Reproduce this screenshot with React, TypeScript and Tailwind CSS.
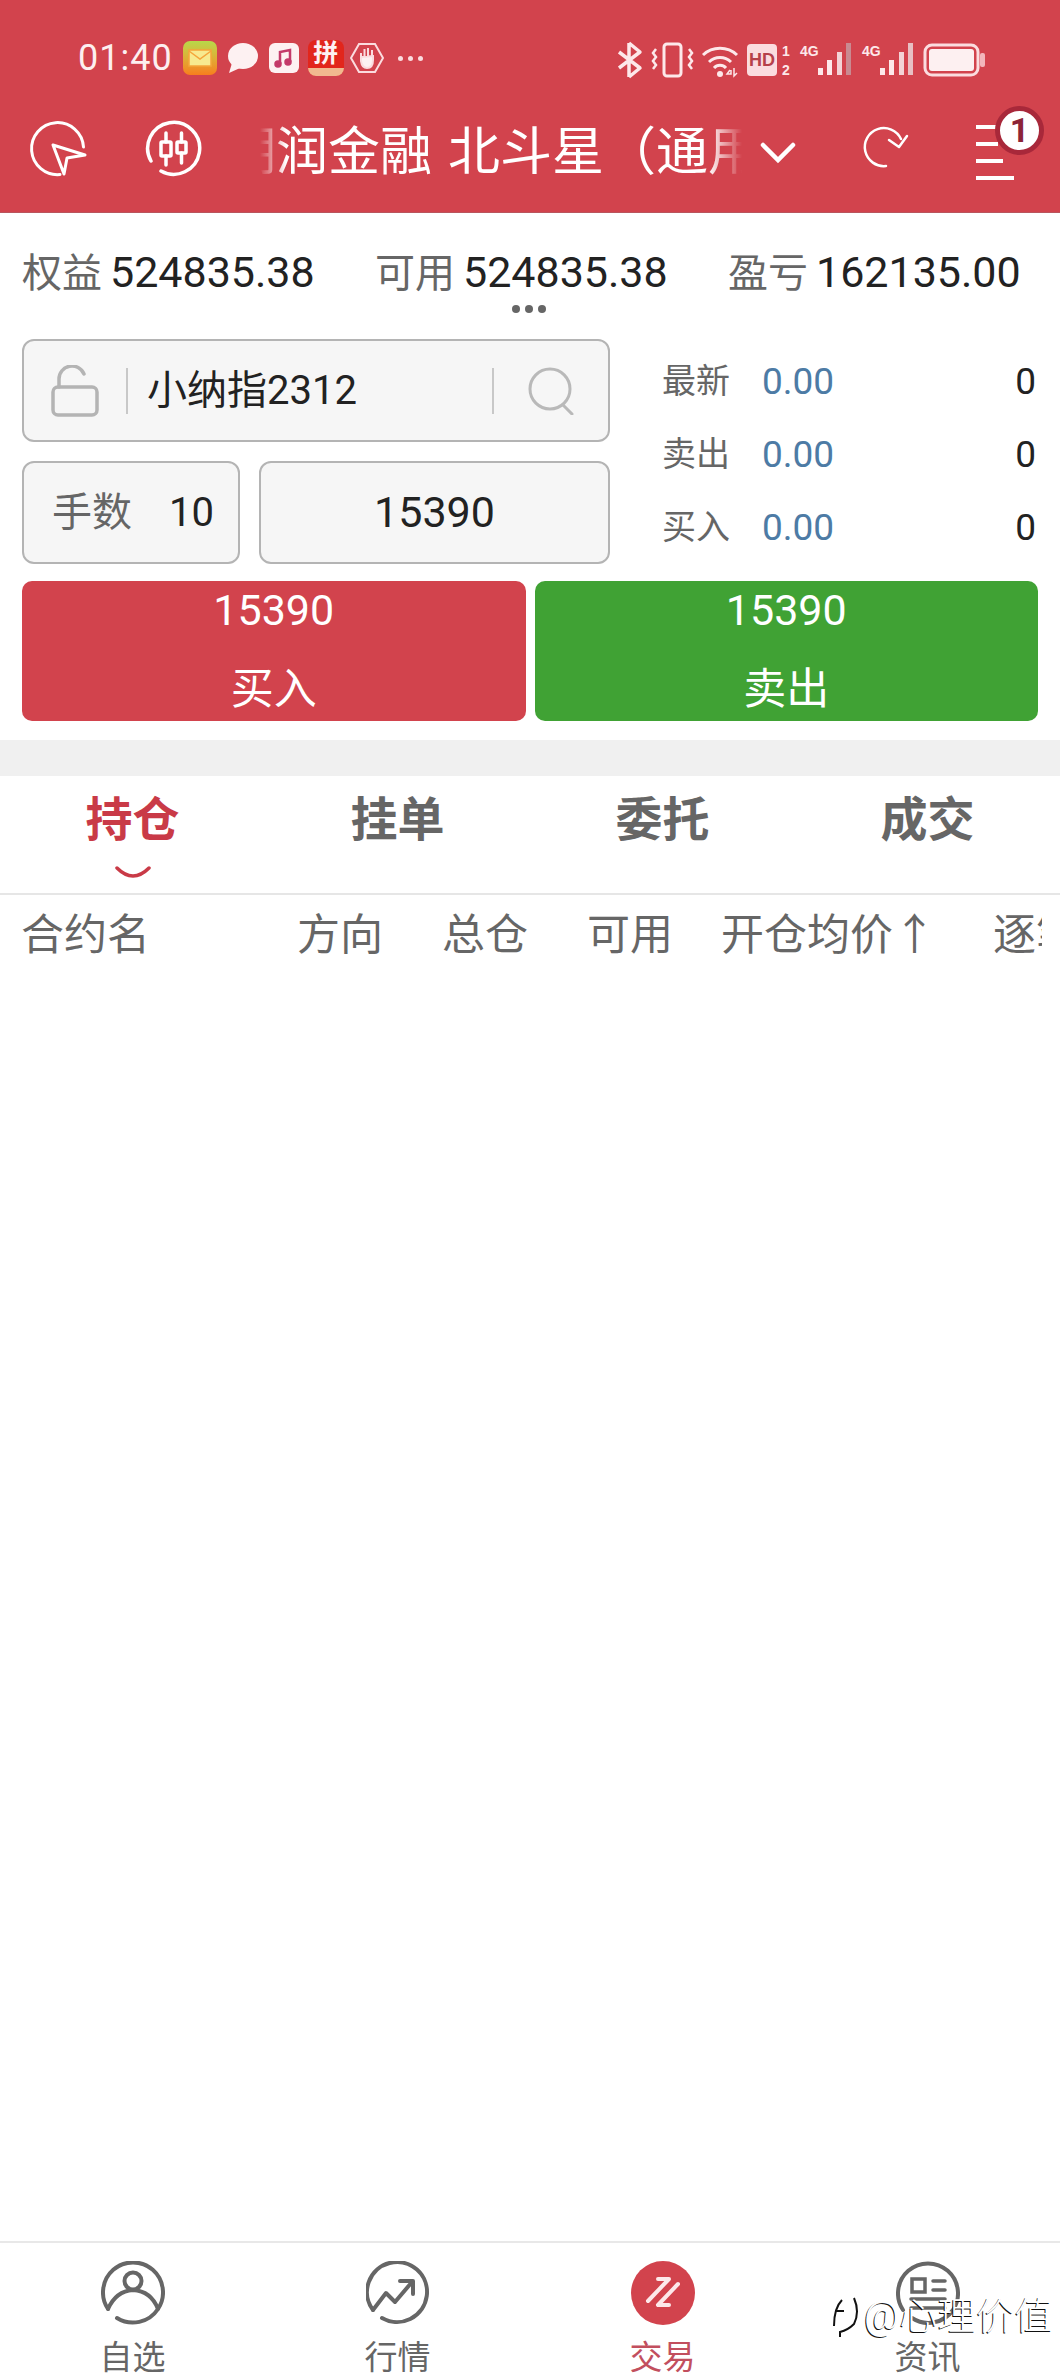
import { ReactNode } from "react";

function LocateIcon() {
  return (
    <svg width="60" height="60" viewBox="0 0 60 60" fill="none" stroke="#fff" strokeWidth="3">
      <path d="M55.5 28 A26 26 0 1 0 32 55.5" strokeLinecap="round" />
      <path d="M25 26 L57 36 L39 39 L36 55 Z" strokeLinejoin="round" strokeWidth="3" />
    </svg>
  );
}

function CandleIcon() {
  return (
    <svg width="60" height="60" viewBox="0 0 60 60" fill="none" stroke="#fff" strokeWidth="3.5" strokeLinecap="round">
      <path d="M7 42 A26 26 0 1 1 17 52" />
      <path d="M22 14 V23 M22 37 V46 M37.5 14 V23 M37.5 34 V44" />
      <rect x="17" y="23" width="10" height="14" rx="1" />
      <rect x="33" y="23" width="9" height="11" rx="1" />
    </svg>
  );
}

function StatusIcons() {
  return (
    <svg width="380" height="40" viewBox="0 0 380 40" fill="none" className="block">
      {/* bluetooth */}
      <path d="M19 3 L30 12 L9 28 M19 37 L30 28 L9 12 M19 3 V37" stroke="#fde8ea" strokeWidth="3.5" strokeLinejoin="round" />
      {/* vibrate */}
      <rect x="54" y="4" width="17" height="32" rx="3" stroke="#fde8ea" strokeWidth="3" />
      <path d="M46 9 l-3 4 l3 4 l-3 4 l3 4 l-3 4 M79 9 l3 4 l-3 4 l3 4 l-3 4 l3 4" stroke="#fde8ea" strokeWidth="2.5" />
      {/* wifi */}
      <path d="M93 15 A25 25 0 0 1 127 15 M99 22 A16 16 0 0 1 121 22 M104 28 A8 8 0 0 1 116 28" stroke="#fde8ea" strokeWidth="3" />
      <circle cx="110" cy="34" r="3" fill="#fde8ea" />
      <path d="M120 30 l-3 4 h4 v-4 M124 28 v8 l3 -3" stroke="#fde8ea" strokeWidth="1.5" />
      {/* hd */}
      <rect x="137" y="4" width="30" height="32" rx="4" fill="#fbdcdf" />
      <text x="152" y="26" fontSize="18" fontWeight="700" fill="#b6404a" textAnchor="middle" fontFamily="Liberation Sans">HD</text>
      <text x="176" y="16" fontSize="14" fontWeight="700" fill="#fde8ea" textAnchor="middle" fontFamily="Liberation Sans">1</text>
      <text x="176" y="35" fontSize="14" fontWeight="700" fill="#fde8ea" textAnchor="middle" fontFamily="Liberation Sans">2</text>
      {/* signal 1 */}
      <text x="190" y="16" fontSize="14" fontWeight="700" fill="#fde8ea" fontFamily="Liberation Sans">4G</text>
      <rect x="208" y="28" width="5" height="7" fill="#fde8ea" />
      <rect x="217" y="20" width="5" height="15" fill="#fde8ea" />
      <rect x="227" y="12" width="5" height="23" fill="#f3d3d6" />
      <rect x="236" y="3" width="5" height="32" fill="#c98a91" />
      {/* signal 2 */}
      <text x="252" y="16" fontSize="14" fontWeight="700" fill="#fde8ea" fontFamily="Liberation Sans">4G</text>
      <rect x="270" y="28" width="5" height="7" fill="#fde8ea" />
      <rect x="279" y="20" width="5" height="15" fill="#fde8ea" />
      <rect x="289" y="12" width="5" height="23" fill="#f3d3d6" />
      <rect x="298" y="3" width="5" height="32" fill="#e8bfc3" />
      {/* battery */}
      <rect x="315" y="5" width="53" height="30" rx="7" stroke="#fbdcdf" strokeWidth="3" />
      <rect x="319" y="9" width="45" height="22" rx="3" fill="#fdf0f1" />
      <rect x="370" y="13" width="5" height="14" rx="2" fill="#f3b6bb" />
    </svg>
  );
}

function AppNotifications() {
  return (
    <div className="flex items-center ml-[10px]">
      <div className="w-[34px] h-[34px] rounded-[7px] bg-gradient-to-b from-[#b6d84a] to-[#f77d1e] flex items-center justify-center">
        <svg width="24" height="18" viewBox="0 0 24 18" fill="#f7ea8f" stroke="#f5a53a" strokeWidth="1.5">
          <rect x="1" y="1" width="22" height="16" />
          <path d="M1 2 L12 10 L23 2" fill="none" />
        </svg>
      </div>
      <svg className="ml-[10px]" width="31" height="32" viewBox="0 0 31 32" fill="#fdf1f2">
        <ellipse cx="16" cy="14" rx="15" ry="13" />
        <path d="M5 21 L2 31 L13 26 Z" />
      </svg>
      <div className="ml-[11px] w-[30px] h-[30px] rounded-[6px] bg-[#fdf1f2] flex items-center justify-center">
        <svg width="20" height="20" viewBox="0 0 20 20" fill="none" stroke="#c43a6a" strokeWidth="2.5">
          <path d="M6 16 V4 L16 2 V14" />
          <circle cx="4" cy="16" r="2.5" fill="#c43a6a" />
          <circle cx="14" cy="14" r="2.5" fill="#c43a6a" />
        </svg>
      </div>
      <div className="ml-[9px] w-[36px] h-[36px] rounded-[8px] bg-[#e2261c] flex flex-col items-center overflow-hidden">
        <span className="text-[25px] leading-[28px] font-bold text-[#fdf1f2]">拼</span>
        <span className="w-full h-[8px] bg-[#f1b98f]" />
      </div>
      <svg className="ml-[6px]" width="34" height="32" viewBox="0 0 34 32" fill="none" stroke="#fbdcdf" strokeWidth="2">
        <path d="M9 2 H25 L33 16 L25 30 H9 L1 16 Z" />
        <path d="M11 16 V11 M14.5 14 V7 M18 14 V6 M22 15 V8 M11 15 V19 Q12 26 17 26 Q23 26 23 18 V14 Z" fill="#fdf1f2" strokeWidth="2" />
      </svg>
      <div className="ml-[14px] flex gap-[5px]">
        <span className="w-[5px] h-[5px] rounded-full bg-[#fbdcdf]" />
        <span className="w-[5px] h-[5px] rounded-full bg-[#fbdcdf]" />
        <span className="w-[5px] h-[5px] rounded-full bg-[#fbdcdf]" />
      </div>
    </div>
  );
}

function Header() {
  return (
    <header className="h-[213px] bg-[#d2434d] border-b border-[#b9555d]">
      <div className="h-[104px] pt-[36px] flex items-start justify-between pl-[78px] pr-[70px]">
        <div className="flex items-center h-[44px]">
          <span className="text-[36px] leading-[44px] text-[#fdeff0] tracking-[1px]">01:40</span>
          <AppNotifications />
        </div>
        <div className="mt-[4px]">
          <StatusIcons />
        </div>
      </div>
      <div className="h-[90px] flex items-center pl-[28px] relative">
        <LocateIcon />
        <div className="ml-[56px]">
          <CandleIcon />
        </div>
        <div className="relative ml-[56px] w-[482px] overflow-hidden mt-[7px]">
          <div className="-ml-[36px] text-[52px] leading-[60px] [word-spacing:3px] text-[#fff] whitespace-nowrap">期润金融 北斗星（通用版）</div>
          <div className="absolute left-0 top-0 bottom-0 w-[26px] bg-gradient-to-r from-[#d2434d] to-transparent" />
          <div className="absolute right-0 top-0 bottom-0 w-[34px] bg-gradient-to-l from-[#d2434d] to-transparent" />
        </div>
        <svg className="ml-[18px] mt-[8px]" width="36" height="22" viewBox="0 0 36 22" fill="none" stroke="#fff" strokeWidth="4.5" strokeLinecap="round">
          <path d="M3 3 L18 18 L33 3" />
        </svg>
        <svg className="ml-[62px]" width="54" height="54" viewBox="0 0 54 54" fill="none" stroke="#fff" strokeWidth="2.5" strokeLinecap="round">
          <path d="M28 44 A19 19 0 1 1 43 17" />
          <path d="M31 18 L41 25 L49 14" strokeLinejoin="round" />
        </svg>
        <div className="ml-[64px] w-[40px] flex flex-col gap-[13px] mt-[6px]">
          <span className="block w-[22px] h-[4px] bg-white" />
          <span className="block w-[22px] h-[4px] bg-white" />
          <span className="block w-[27px] h-[4px] bg-white" />
          <span className="block w-[38px] h-[4px] bg-white" />
        </div>
        <div className="absolute left-[995px] top-[2px] w-[49px] h-[49px] rounded-full bg-white border-[5px] border-[#a8283a] flex items-center justify-center text-[34px] font-bold text-[#8c2436]">
          1
        </div>
      </div>
    </header>
  );
}

function Stat({ label, value, className }: { label: string; value: string; className: string }) {
  return (
    <div className={"flex items-baseline gap-[8px] " + className}>
      <span className="text-[40px] text-[#666]">{label}</span>
      <span className="text-[43px] text-[#222]">{value}</span>
    </div>
  );
}

function Box({ className, children }: { className: string; children: ReactNode }) {
  return (
    <div className={"border-2 border-[#b4b4b4] rounded-[12px] bg-[#f6f6f6] flex items-center " + className}>{children}</div>
  );
}

function QuoteRow({ label }: { label: string }) {
  return (
    <div className="flex items-center h-[73px]">
      <span className="w-[100px] text-[34px] text-[#666]">{label}</span>
      <span className="text-[37px] text-[#4d7ba5]">0.00</span>
      <span className="ml-auto text-[37px] text-[#222]">0</span>
    </div>
  );
}

function OrderPanel() {
  return (
    <section className="px-[22px]">
      <div className="flex h-[225px]">
        <div className="w-[588px] shrink-0">
          <Box className="h-[103px] relative">
            <svg className="ml-[26px]" width="50" height="52" viewBox="0 0 50 52" fill="none" stroke="#b4b4b4" strokeWidth="3.5">
              <rect x="3" y="22" width="44" height="28" rx="5" />
              <path d="M9 22 V14 A13 13 0 0 1 34 9" strokeLinecap="round" />
            </svg>
            <span className="ml-[26px] w-[2px] h-[46px] bg-[#c8c8c8]" />
            <span className="ml-[19px] text-[40px] text-[#222]">小纳指2312</span>
            <span className="ml-auto w-[2px] h-[46px] bg-[#c8c8c8]" />
            <svg className="ml-[34px] mr-[32px]" width="48" height="48" viewBox="0 0 48 48" fill="none" stroke="#b9b9b9" strokeWidth="3">
              <circle cx="22" cy="22" r="20" />
              <path d="M35 38 L44 47" strokeLinecap="round" />
            </svg>
          </Box>
          <div className="flex gap-[19px] mt-[19px]">
            <Box className="w-[218px] h-[103px] pl-[28px]">
              <span className="text-[40px] text-[#666]">手数</span>
              <span className="ml-[37px] text-[40px] text-[#222]">10</span>
            </Box>
            <Box className="flex-1 h-[103px] justify-center">
              <span className="text-[43px] text-[#222]">15390</span>
            </Box>
          </div>
        </div>
        <div className="flex-1 ml-[52px] pr-[2px] pt-[6px]">
          <QuoteRow label="最新" />
          <QuoteRow label="卖出" />
          <QuoteRow label="买入" />
        </div>
      </div>
      <div className="flex gap-[9px] mt-[17px]">
        <button className="flex-1 h-[140px] rounded-[10px] bg-[#d2434d] flex flex-col items-center text-white pt-[1px]">
          <span className="text-[43px] leading-[56px]">15390</span>
          <span className="text-[43px] leading-[56px] mt-[23px]">买入</span>
        </button>
        <button className="flex-1 h-[140px] rounded-[10px] bg-[#40a234] flex flex-col items-center text-white pt-[1px]">
          <span className="text-[43px] leading-[56px]">15390</span>
          <span className="text-[43px] leading-[56px] mt-[23px]">卖出</span>
        </button>
      </div>
    </section>
  );
}

const tabs = ["持仓", "挂单", "委托", "成交"];

function Tabs() {
  return (
    <div className="grid grid-cols-4 h-[119px] border-b-2 border-[#e6e6e6]">
      {tabs.map((tab, i) => (
        <div key={tab} className="flex flex-col items-center pt-[16px]">
          <span className={"text-[47px] leading-[56px] font-bold " + (i === 0 ? "text-[#c93a47]" : "text-[#666]")}>{tab}</span>
          {i === 0 && (
            <svg className="mt-[18px]" width="38" height="14" viewBox="0 0 38 14" fill="none" stroke="#c93a47" strokeWidth="3.5" strokeLinecap="round">
              <path d="M3 2 Q19 18 35 2" />
            </svg>
          )}
        </div>
      ))}
    </div>
  );
}

function TableHead() {
  return (
    <div className="w-[1042px] overflow-hidden pl-[21px] pt-[12px] grid grid-cols-[276px_145px_145px_134px_272px_90px] text-[43px] leading-[56px] text-[#666] whitespace-nowrap">
      <span>合约名</span>
      <span>方向</span>
      <span>总仓</span>
      <span>可用</span>
      <span>开仓均价↑</span>
      <span>逐笔</span>
    </div>
  );
}

function NavItem({ label, active, children }: { label: string; active?: boolean; children: ReactNode }) {
  return (
    <div className="flex flex-col items-center">
      {children}
      <span className={"mt-[15px] text-[33px] leading-[36px] " + (active ? "text-[#c24f5e]" : "text-[#666]")}>{label}</span>
    </div>
  );
}

function BottomNav() {
  return (
    <nav className="mt-auto h-[135px] border-t-2 border-[#e8e8e8] pt-[18px] grid grid-cols-4 overflow-hidden">
      <NavItem label="自选">
        <svg width="64" height="64" viewBox="0 0 64 64" fill="none" stroke="#666" strokeWidth="4" strokeLinecap="round">
          <path d="M7 48 A30 30 0 1 1 57 48 A30 30 0 0 1 16 57" />
          <circle cx="32" cy="20" r="8.5" />
          <path d="M7 48 Q15 30 32 29 Q50 30 57 48" />
        </svg>
      </NavItem>
      <NavItem label="行情">
        <svg width="64" height="64" viewBox="0 0 64 64" fill="none" stroke="#666" strokeWidth="4" strokeLinecap="round">
          <path d="M7 49 A30 30 0 1 1 16 57" />
          <path d="M7 49 L20 32 L29 41 L46 21" strokeLinejoin="round" />
          <path d="M34 20 H47 V33" strokeLinejoin="round" />
        </svg>
      </NavItem>
      <NavItem label="交易" active>
        <svg width="64" height="64" viewBox="0 0 64 64" fill="none">
          <circle cx="32" cy="32" r="32" fill="#d2434d" />
          <path d="M27 18 H38 L17 40 M47 23 L27 44 H38" stroke="#fde8ea" strokeWidth="4" strokeLinecap="round" strokeLinejoin="round" />
        </svg>
      </NavItem>
      <NavItem label="资讯">
        <svg width="64" height="64" viewBox="0 0 64 64" fill="none" stroke="#666" strokeWidth="4" strokeLinecap="round">
          <path d="M7 49 A30 30 0 1 1 57 49 A30 30 0 0 1 16 57" />
          <rect x="16" y="18" width="13" height="13" strokeWidth="3.5" />
          <path d="M37 20 H49 M37 29 H49 M15 38 H49 M15 47 H49" strokeWidth="3.5" />
        </svg>
      </NavItem>
    </nav>
  );
}

function Watermark() {
  return (
    <div className="absolute left-[830px] top-[2294px] flex items-center text-white">
      <svg width="30" height="44" viewBox="0 0 30 44" fill="none" stroke="#111" strokeWidth="2">
        <path d="M4 32 Q4 14 12 6 M24 4 Q30 18 24 30 Q18 36 10 38 L10 43" />
        <path d="M6 17 H14" />
      </svg>
      <span className="ml-[4px] text-[38px] leading-[44px] tracking-[0.5px] font-light [text-shadow:-1px_1px_0_#111]">@心理价值</span>
    </div>
  );
}

export default function App() {
  return (
    <div className="relative w-[1060px] h-[2376px] bg-white overflow-hidden flex flex-col font-['Roboto','Noto_Sans_CJK_SC',sans-serif]">
      <Header />
      <div className="flex px-[22px] h-[126px] pt-[27px] relative">
        <Stat label="权益" value="524835.38" className="w-[353px]" />
        <Stat label="可用" value="524835.38" className="w-[353px]" />
        <Stat label="盈亏" value="162135.00" className="w-[310px]" />
        <div className="absolute left-[512px] top-[92px] flex gap-[5px]">
          <span className="w-[8px] h-[8px] rounded-full bg-[#666]" />
          <span className="w-[8px] h-[8px] rounded-full bg-[#666]" />
          <span className="w-[8px] h-[8px] rounded-full bg-[#666]" />
        </div>
      </div>
      <OrderPanel />
      <div className="h-[36px] mt-[19px] bg-[#f0f0f0]" />
      <Tabs />
      <TableHead />
      <BottomNav />
      <Watermark />
    </div>
  );
}
